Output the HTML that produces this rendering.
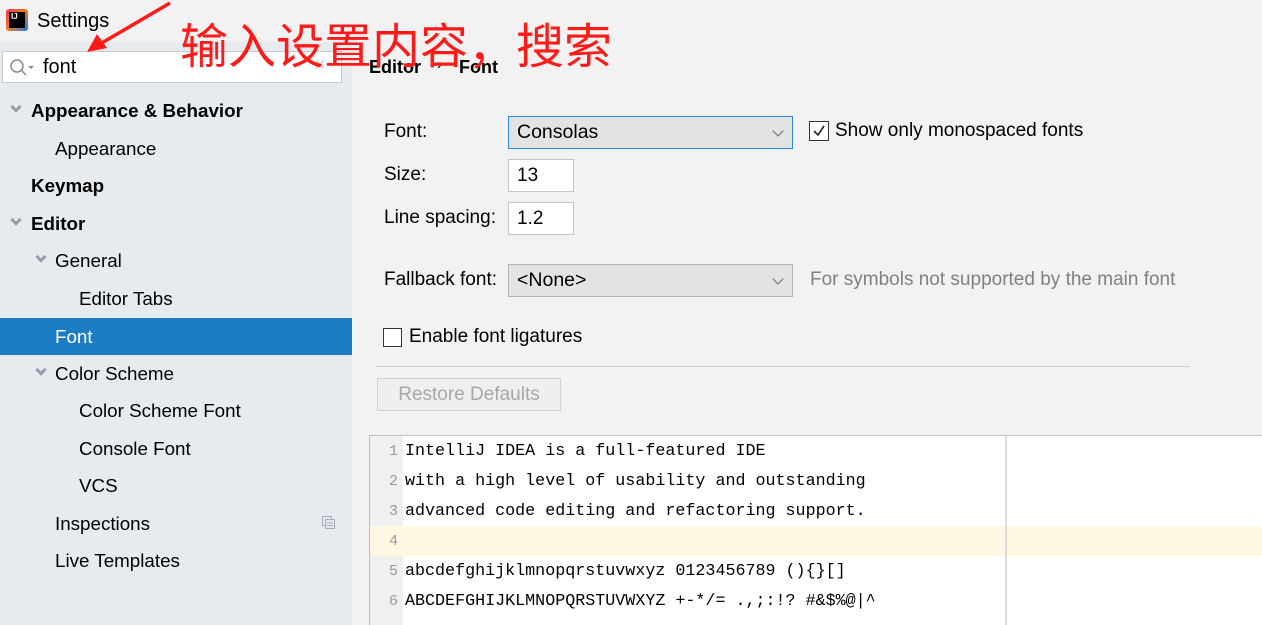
<!DOCTYPE html>
<html><head><meta charset="utf-8"><style>
*{margin:0;padding:0;box-sizing:border-box}
body{width:1262px;height:625px;overflow:hidden;background:#f2f2f2;font-family:"Liberation Sans","Noto Sans CJK SC",sans-serif;color:#000;position:relative}
.a{position:absolute;white-space:nowrap}
#side{position:absolute;left:0;top:42px;width:352px;height:583px;background:#e6ebf0}
.row{position:absolute;left:0;width:352px;height:37px;line-height:37px;font-size:18.8px}
.b{font-weight:bold}
.chev{position:absolute;width:8px;height:8px;border-right:3px solid #9a9ea3;border-bottom:3px solid #9a9ea3;transform:rotate(45deg);top:11px}
.lbl{position:absolute;font-size:19px}
.box{position:absolute;border:1px solid #c4c4c4;background:#fff;font-size:19px;padding-left:8px}
.combo{position:absolute;border:1px solid #b4b4b4;background:#e3e3e3;font-size:19.5px;padding-left:8px}
.dd{position:absolute;right:10px;top:10px;width:8px;height:8px;border-right:1.5px solid #666;border-bottom:1.5px solid #666;transform:rotate(45deg)}
.code{position:absolute;left:405px;font-family:"Liberation Mono",monospace;font-size:16.7px;line-height:30px;height:30px}
.ln{position:absolute;left:370px;width:28px;text-align:right;font-family:"Liberation Mono",monospace;font-size:15px;color:#999;line-height:30px}
</style></head><body>
<div class="a" style="left:6px;top:9px;width:22px;height:22px;background:linear-gradient(135deg,#fe315d,#f97a12 50%,#087cfa);border-radius:3px"></div>
<div class="a" style="left:9px;top:12px;width:16px;height:16px;background:#000;color:#fff;font-size:8px;font-weight:bold;padding:1px 2px;line-height:8px">IJ</div>
<div class="a" style="left:37px;top:10px;font-size:20px">Settings</div>

<div id="side"></div>
<div class="a" style="left:2px;top:51px;width:340px;height:32px;background:#fff;border:1px solid #c9c9c9"></div>
<svg class="a" style="left:9px;top:58px" width="30" height="20"><circle cx="8" cy="8" r="6" fill="none" stroke="#888" stroke-width="1.5"/><line x1="12.5" y1="12.5" x2="17" y2="17" stroke="#888" stroke-width="1.5"/><path d="M19 8 L25 8 L22 11Z" fill="#888"/></svg>
<div class="a" style="left:43px;top:56px;font-size:20px">font</div>
<div class="a" style="left:314px;top:54px;font-size:20px;color:#ccc">×</div>

<div class="row b" style="top:92px"><span class="chev" style="left:12px"></span><span style="position:absolute;left:31px">Appearance &amp; Behavior</span></div>
<div class="row" style="top:130px"><span style="position:absolute;left:55px">Appearance</span></div>
<div class="row b" style="top:167px"><span style="position:absolute;left:31px">Keymap</span></div>
<div class="row b" style="top:205px"><span class="chev" style="left:12px"></span><span style="position:absolute;left:31px">Editor</span></div>
<div class="row" style="top:242px"><span class="chev" style="left:37px"></span><span style="position:absolute;left:55px">General</span></div>
<div class="row" style="top:280px"><span style="position:absolute;left:79px">Editor Tabs</span></div>
<div class="row" style="top:318px;background:#1c7cc4;color:#fff"><span style="position:absolute;left:55px">Font</span></div>
<div class="row" style="top:355px"><span class="chev" style="left:37px"></span><span style="position:absolute;left:55px">Color Scheme</span></div>
<div class="row" style="top:392px"><span style="position:absolute;left:79px">Color Scheme Font</span></div>
<div class="row" style="top:430px"><span style="position:absolute;left:79px">Console Font</span></div>
<div class="row" style="top:467px"><span style="position:absolute;left:79px">VCS</span></div>
<div class="row" style="top:505px"><span style="position:absolute;left:55px">Inspections</span>
<svg style="position:absolute;left:322px;top:11px" width="14" height="14"><rect x="0.5" y="0.5" width="9" height="9" fill="none" stroke="#aab"/><rect x="3.5" y="3.5" width="9" height="9" fill="#e6ebf0" stroke="#aab"/><line x1="5" y1="7" x2="11" y2="7" stroke="#aab"/><line x1="5" y1="9.5" x2="11" y2="9.5" stroke="#aab"/></svg></div>
<div class="row" style="top:542px"><span style="position:absolute;left:55px">Live Templates</span></div>

<div class="a b" style="left:369px;top:57px;font-size:18px">Editor</div>
<div class="a" style="left:437px;top:56px;font-size:15px">›</div>
<div class="a b" style="left:459px;top:57px;font-size:18px">Font</div>

<div class="lbl" style="left:384px;top:121px">Font:</div>
<div class="combo" style="left:508px;top:116px;width:285px;height:33px;border:1.5px solid #2a8ae0;line-height:31px">Consolas<span class="dd"></span></div>
<div class="a" style="left:809px;top:121px;width:20px;height:20px;border:1.5px solid #333;background:#fff"></div>
<svg class="a" style="left:811px;top:123px" width="16" height="16"><path d="M3 8 L7 12 L13 3" fill="none" stroke="#222" stroke-width="1.6"/></svg>
<div class="lbl" style="left:835px;top:120px">Show only monospaced fonts</div>

<div class="lbl" style="left:384px;top:164px">Size:</div>
<div class="box" style="left:508px;top:159px;width:66px;height:33px;line-height:31px">13</div>
<div class="lbl" style="left:384px;top:207px">Line spacing:</div>
<div class="box" style="left:508px;top:202px;width:66px;height:33px;line-height:31px">1.2</div>

<div class="lbl" style="left:384px;top:269px">Fallback font:</div>
<div class="combo" style="left:508px;top:264px;width:285px;height:33px;line-height:31px">&lt;None&gt;<span class="dd"></span></div>
<div class="lbl" style="left:810px;top:269px;color:#808080">For symbols not supported by the main font</div>

<div class="a" style="left:383px;top:328px;width:19px;height:19px;border:1.5px solid #333;background:#fff"></div>
<div class="lbl" style="left:409px;top:326px">Enable font ligatures</div>

<div class="a" style="left:376px;top:366px;width:814px;height:1px;background:#d0d0d0"></div>
<div class="a" style="left:377px;top:378px;width:184px;height:33px;border:1px solid #d0d0d0;background:#efefef;color:#a8a8a8;font-size:19px;text-align:center;line-height:31px">Restore Defaults</div>

<div class="a" style="left:369px;top:435px;width:893px;height:190px;background:#fff;border-top:1px solid #c0c0c0;border-left:1px solid #c0c0c0"></div>
<div class="a" style="left:370px;top:436px;width:33px;height:189px;background:#f0f0f0"></div>
<div class="a" style="left:370px;top:526px;width:892px;height:30px;background:#fef8e3"></div>
<div class="a" style="left:1005px;top:436px;width:2px;height:189px;background:#dcdcdc"></div>
<div class="ln" style="top:437px">1</div><div class="code" style="top:437px">IntelliJ IDEA is a full-featured IDE</div>
<div class="ln" style="top:467px">2</div><div class="code" style="top:467px">with a high level of usability and outstanding</div>
<div class="ln" style="top:497px">3</div><div class="code" style="top:497px">advanced code editing and refactoring support.</div>
<div class="ln" style="top:527px">4</div>
<div class="ln" style="top:557px">5</div><div class="code" style="top:557px">abcdefghijklmnopqrstuvwxyz 0123456789 (){}[]</div>
<div class="ln" style="top:587px">6</div><div class="code" style="top:587px">ABCDEFGHIJKLMNOPQRSTUVWXYZ +-*/= .,;:!? #&amp;$%@|^</div>

<svg class="a" style="left:0;top:0" width="200" height="60"><line x1="170" y1="3" x2="100" y2="44" stroke="#ff1a1a" stroke-width="3.5"/><path d="M87 52 L97 34 L107 48Z" fill="#ff1a1a"/></svg>
<div class="a" style="left:180px;top:12px;font-size:48px;color:#ff1a1a;font-family:'Noto Sans CJK SC',sans-serif;line-height:60px">输入设置内容，搜索</div>
</body></html>
